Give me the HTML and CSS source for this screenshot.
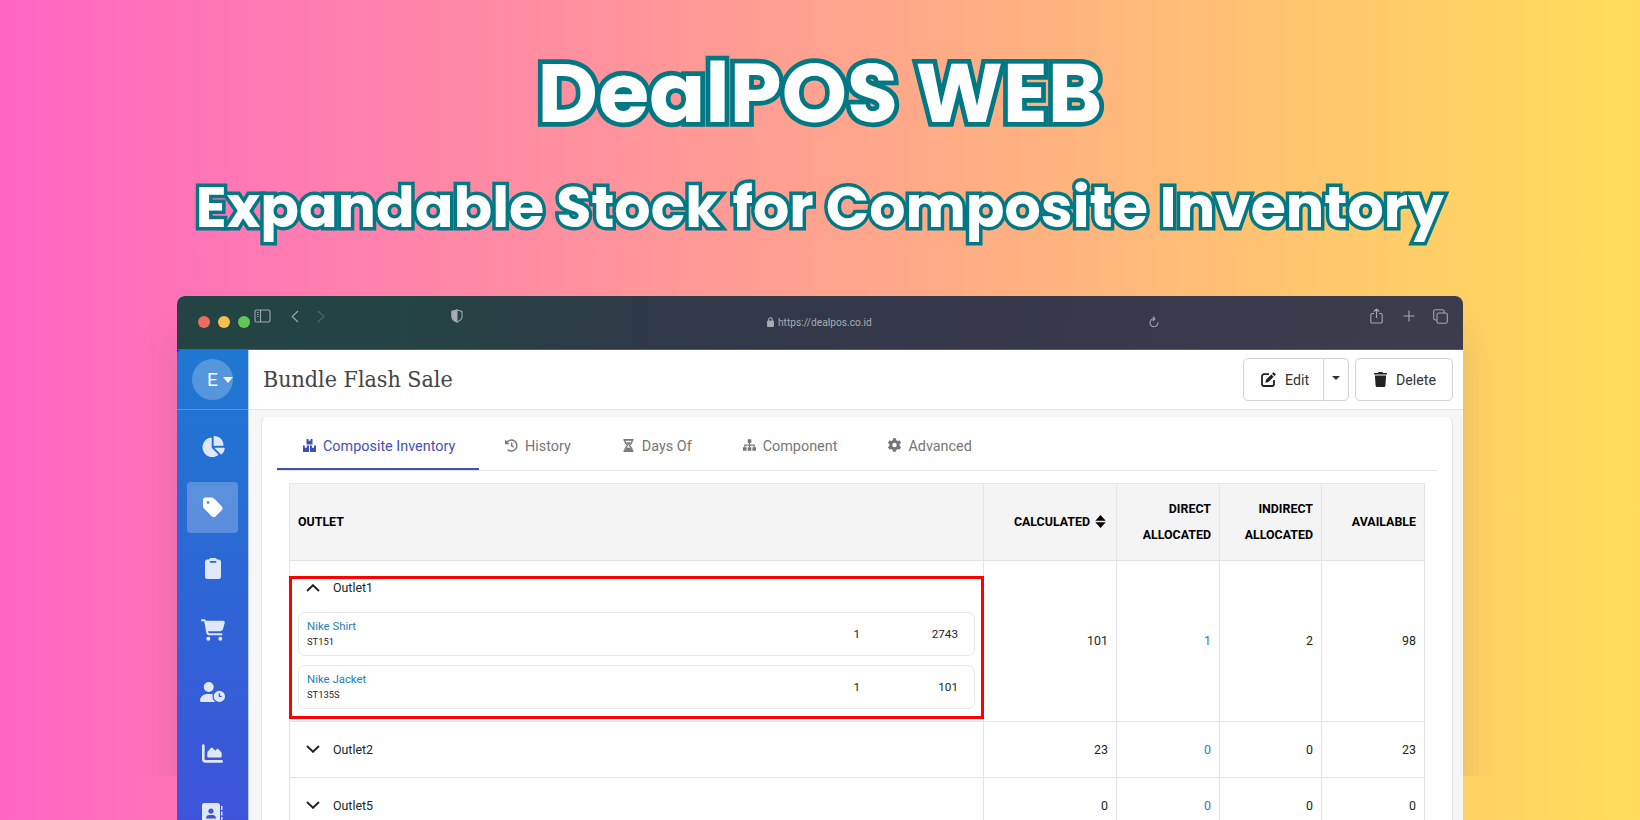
FILE: index.html
```html
<!DOCTYPE html>
<html lang="en">
<head>
    <meta charset="UTF-8">
    <meta name="viewport" content="width=device-width, initial-scale=1.0">
    <title>DealPOS WEB</title>
    <link rel="stylesheet" href="styles.css">
</head>
<body>

<div class="hero">
    <h1>DealPOS WEB</h1>
    <h2>Expandable Stock for Composite Inventory</h2>
</div>

<div class="stage">
    <div class="window-shadow"></div>
    <div class="window">
        <div class="titlebar">
            <div class="lights"><span class="red"></span><span class="yellow"></span><span class="green"></span></div>
            <svg class="i-panel" width="17" height="14" viewBox="0 0 17 14"><rect x="1" y="1" width="15" height="12" rx="1.5"/><path d="M6.5 1v12M3 3.5h1.5M3 5.5h1.5M3 7.5h1.5"/></svg>
            <svg class="i-back" width="8" height="13" viewBox="0 0 8 13"><path d="M7 1L1.2 6.500 7 12"/></svg>
            <svg class="i-next" width="8" height="13" viewBox="0 0 8 13"><path d="M1 1l5.800 5.500L1 12"/></svg>
            <svg class="i-shield" width="12" height="14" viewBox="0 0 12 14"><path d="M6 1L11 2.500V8c0 2.500-2.500 4-5 5C3.500 12 1 10.500 1 8V2.500z"/><path class="fill" d="M6 1v12C3.500 12 1 10.500 1 8V2.500z"/></svg>
            <div class="address">
                <svg width="7" height="10" viewBox="0 0 7 10"><rect class="fill" x="0.300" y="4" width="6.400" height="5.500" rx="0.800"/><path d="M1.600 4.500V2.800a1.900 1.900 0 0 1 3.800 0v1.700"/></svg>
                <span>https://dealpos.co.id</span>
            </div>
            <svg class="i-reload" width="10" height="12" viewBox="0 0 10 12"><path d="M5.500 2.800A4 4 0 1 0 9 6.500M3.800 .6L6 2.800 3.800 5"/></svg>
            <svg class="i-share" width="13" height="16" viewBox="0 0 13 16"><path d="M4 5.500H2A1.200 1.200 0 0 0 .8 6.700v7A1.200 1.200 0 0 0 2 15h9a1.200 1.200 0 0 0 1.200-1.300v-7A1.200 1.200 0 0 0 11 5.500H9M6.500 10V1M3.800 3.500L6.500 1l2.700 2.500"/></svg>
            <svg class="i-plus" width="12" height="12" viewBox="0 0 12 12"><path d="M6 .5v11M.5 6h11"/></svg>
            <svg class="i-copy" width="15" height="15" viewBox="0 0 15 15"><rect x="4" y="4" width="10.300" height="10.300" rx="1.800"/><path d="M4 11H2.500A1.800 1.800 0 0 1 .7 9.200V2.500A1.800 1.800 0 0 1 2.500.7h6.700A1.800 1.800 0 0 1 11 2.500V4"/></svg>
        </div>

        <div class="app">
            <div class="sidebar">
                <div class="user"><div class="avatar">E<span class="caret"></span></div></div>
                <div class="nav">
                    <a><svg width="24" height="21" viewBox="0 0 576 512"><path d="M304 240V16.600c0-9 7-16.600 16-16.600C443.700 0 544 100.300 544 224c0 9-7.600 16-16.600 16H304zM32 272C32 150.700 122.100 50.300 239 34.300c9.200-1.300 17 6.100 17 15.400V288L412.500 444.500c6.700 6.700 6.200 17.700-1.500 23.100C371.800 495.600 323.800 512 272 512C139.500 512 32 404.600 32 272zm526.400 16c9.300 0 16.600 7.800 15.400 17c-7.700 55.900-34.600 105.600-73.900 142.300c-6 5.600-15.400 5.200-21.200-.7L320 288H558.400z"/></svg></a>
                    <a class="active"><svg width="20" height="23" viewBox="0 0 448 512"><path d="M0 80V229.500c0 17 6.700 33.300 18.700 45.300l176 176c25 25 65.500 25 90.500 0L418.700 317.300c25-25 25-65.500 0-90.500l-176-176c-12-12-28.300-18.700-45.300-18.700H48C21.500 32 0 53.500 0 80zm112 32a32 32 0 1 1 0 64 32 32 0 1 1 0-64z"/></svg></a>
                    <a><svg width="16" height="21" viewBox="0 0 16 21"><path fill-rule="evenodd" d="M2.500 1.500h1.300Q4.500 0 6 0h4q1.500 0 2.200 1.500h1.300A2.500 2.500 0 0 1 16 4v14.500a2.500 2.500 0 0 1-2.500 2.500h-11A2.500 2.500 0 0 1 0 18.500V4a2.500 2.500 0 0 1 2.500-2.500zM5.500 3a.8.8 0 0 0 0 1.700h5a.8.8 0 0 0 0-1.700z"/></svg></a>
                    <a><svg width="24" height="22" viewBox="0 0 576 512"><path d="M0 24C0 10.700 10.700 0 24 0H69.500c22 0 41.500 12.800 50.600 32h411c26.300 0 45.500 25 38.600 50.400l-41 152.300c-8.500 31.400-37 53.300-69.500 53.300H170.700l5.400 28.500c2.200 11.300 12.100 19.500 23.600 19.500H488c13.300 0 24 10.700 24 24s-10.700 24-24 24H199.700c-34.600 0-64.300-24.600-70.700-58.500L77.400 54.500c-.7-3.800-4-6.500-7.900-6.500H24C10.700 48 0 37.300 0 24zM128 464a48 48 0 1 1 96 0 48 48 0 1 1 -96 0zm336-48a48 48 0 1 1 0 96 48 48 0 1 1 0-96z"/></svg></a>
                    <a><svg class="wide" width="27" height="22" viewBox="0 0 640 512"><path d="M224 0a128 128 0 1 1 0 256A128 128 0 1 1 224 0zM178.300 304h91.400c20.600 0 40.400 3.500 58.800 9.900C323 331 320 349.100 320 368c0 59.500 29.500 112.100 74.800 144H29.700C13.300 512 0 498.700 0 482.300C0 383.800 79.800 304 178.300 304zM352 368a144 144 0 1 1 288 0 144 144 0 1 1 -288 0zm144-80c-8.800 0-16 7.200-16 16v64c0 8.800 7.200 16 16 16h48c8.800 0 16-7.200 16-16s-7.200-16-16-16H512V304c0-8.800-7.200-16-16-16z"/></svg></a>
                    <a><svg width="21" height="21" viewBox="0 0 512 512"><path d="M64 64c0-17.700-14.300-32-32-32S0 46.300 0 64V400c0 44.200 35.800 80 80 80H480c17.700 0 32-14.300 32-32s-14.300-32-32-32H80c-8.800 0-16-7.200-16-16V64zm96 288H448c17.700 0 32-14.300 32-32V251.800c0-7.600-2.700-15-7.700-20.800l-65.800-76.800c-12.100-14.200-33.700-15-46.900-1.800l-21 21c-10 10-26.400 9.200-35.400-1.600l-39.200-47c-12.600-15.100-35.700-15.400-48.700-.6L135.900 215c-5.100 5.800-7.900 13.300-7.900 21.100v84c0 17.700 14.300 32 32 32z"/></svg></a>
                    <a><svg width="21" height="22" viewBox="0 0 21 22"><path fill-rule="evenodd" d="M2.500 0h13A2.500 2.500 0 0 1 18 2.500v17a2.500 2.500 0 0 1-2.500 2.500h-13A2.500 2.500 0 0 1 0 19.500v-17A2.500 2.500 0 0 1 2.500 0zM9 5.500a2.600 2.600 0 1 0 0 5.200 2.600 2.600 0 0 0 0-5.200zM7.500 12a3.400 3.400 0 0 0-3.400 3.400h9.800A3.400 3.400 0 0 0 10.500 12zM19 3h1.500v4H19zM19 8.500h1.500v4H19zM19 14h1.500v4H19z"/></svg></a>
                </div>
            </div>

            <div class="main">
                <div class="header">
                    <h3>Bundle Flash Sale</h3>
                    <div class="actions">
                        <div class="btn-group">
                            <button class="btn edit"><svg width="15" height="15" viewBox="0 0 15 15"><path class="line" d="M8 2.200H3A2 2 0 0 0 1 4.200V12a2 2 0 0 0 2 2h8a2 2 0 0 0 2-2V8"/><path d="M4.300 10.800l.7-3L10.300 2.400l2.400 2.400L7.300 10.100zM11 1.700l1-1a1 1 0 0 1 1.400 0l1 1a1 1 0 0 1 0 1.400l-1 1z"/></svg>Edit</button>
                            <button class="btn toggle"><span class="caret"></span></button>
                        </div>
                        <button class="btn delete"><svg width="13" height="15" viewBox="0 0 13 15"><path d="M4 .9L4.500 0h4l.5.900h3.500a.5.500 0 0 1 .5.500v1H0v-1a.5.500 0 0 1 .5-.500zM.9 3.500h11.200l-.7 10a1.500 1.500 0 0 1-1.500 1.500H3.100a1.500 1.500 0 0 1-1.500-1.500z"/></svg>Delete</button>
                    </div>
                </div>

                <div class="panel">
                    <div class="tabs">
                        <a class="tab active"><svg width="13" height="13" viewBox="0 0 13 13"><path d="M3.500 0h2v2l1-.6 1 .6V0h2v5.500h-6zM0 6.500h1.800v2.500l1-.6 1 .6V6.500H6V13H.5a.5.500 0 0 1-.5-.5zM7 6.500h2v2.500l1-.6 1 .6V6.500h2v6a.5.500 0 0 1-.5.5H7z"/></svg>Composite Inventory</a>
                        <a class="tab"><svg width="13" height="13" viewBox="0 0 13 13"><path class="line" d="M1.700 3.600A5.500 5.500 0 1 1 2.600 10.600M6.700 3.500v3.300l2 1.500"/><path d="M0 .6v4.700h4.700z"/></svg>History</a>
                        <a class="tab"><svg width="13" height="13" viewBox="-1 0 13 13"><path d="M.5 0h10v1.700h-10zM.5 11.300h10V13h-10z"/><path class="line" d="M2 1v1.500c0 2 2.500 3 2.500 4S2 8.500 2 10.500V12M9 1v1.500c0 2-2.500 3-2.500 4s2.500 2 2.500 4V12"/><path d="M2.500 11.500c0-2 1.500-3 3-3s3 1 3 3zM3 3.300h5L5.500 6z"/></svg>Days Of</a>
                        <a class="tab"><svg width="13" height="12" viewBox="0 0 13 12"><path d="M4.700 .3h3.600v3.600H4.700zM0 8.200h3.600v3.500H0zM4.700 8.200h3.600v3.500H4.700zM9.400 8.200H13v3.500H9.400z"/><path class="thin" d="M6.500 3.500v5M1.800 8.500V6.100h9.400v2.400"/></svg>Component</a>
                        <a class="tab"><svg width="13" height="14" viewBox="0.500 0 13 14"><circle class="line ring" cx="7" cy="7" r="3.700"/><path class="line teeth" d="M7 .3V3M7 11v2.700M1.200 3.650l2.300 1.350M10.500 9l2.300 1.350M1.200 10.350L3.500 9M10.500 5l2.300-1.350"/></svg>Advanced</a>
                    </div>

                    <table>
                        <colgroup><col class="c-outlet"><col class="c-calc"><col class="c-direct"><col class="c-indirect"><col class="c-avail"></colgroup>
                        <tr class="head">
                            <th>OUTLET</th>
                            <th class="calc">CALCULATED<svg width="11" height="13" viewBox="0 0 11 13"><path d="M5.500 0L10.700 5.700H.3zM.3 7.200h10.400L5.500 13z"/></svg></th>
                            <th>DIRECT<br>ALLOCATED</th>
                            <th>INDIRECT<br>ALLOCATED</th>
                            <th>AVAILABLE</th>
                        </tr>
                        <tr class="open">
                            <td>
                                <div class="outlet"><svg width="14" height="8" viewBox="0 0 14 8"><path d="M1 7l6-5.800L13 7"/></svg>Outlet1</div>
                                <div class="item">
                                    <div class="name"><a>Nike Shirt</a><small>ST151</small></div>
                                    <span class="qty">1</span><span class="stock">2743</span>
                                </div>
                                <div class="item">
                                    <div class="name"><a>Nike Jacket</a><small>ST135S</small></div>
                                    <span class="qty">1</span><span class="stock">101</span>
                                </div>
                                <div class="highlight"></div>
                            </td>
                            <td>101</td><td><a>1</a></td><td>2</td><td>98</td>
                        </tr>
                        <tr>
                            <td><div class="outlet"><svg width="14" height="8" viewBox="0 0 14 8"><path d="M1 1l6 5.800L13 1"/></svg>Outlet2</div></td>
                            <td>23</td><td><a>0</a></td><td>0</td><td>23</td>
                        </tr>
                        <tr>
                            <td><div class="outlet"><svg width="14" height="8" viewBox="0 0 14 8"><path d="M1 1l6 5.800L13 1"/></svg>Outlet5</div></td>
                            <td>0</td><td><a>0</a></td><td>0</td><td>0</td>
                        </tr>
                    </table>
                </div>
            </div>
        </div>
    </div>
</div>

</body>
</html>
```
FILE: styles.css
```css
* {
    box-sizing: border-box;
}

body {
    margin: 0;
    height: 820px;
    overflow: hidden;
    font-family: Roboto, 'Liberation Sans', sans-serif;
    background: linear-gradient(90deg, #ff66c4, #ffde59);
    color: #212529;
}

svg {
    flex: none;
}

.hero {
    height: 296px;
    padding-top: 33px;
    text-align: center;
}

.hero h1, .hero h2 {
    margin: 0;
    font-family: Poppins, Inter, sans-serif;
    font-weight: 700;
    color: #fff;
    white-space: nowrap;
    paint-order: stroke fill;
    -webkit-text-stroke-color: #007985;
}

.hero h1 {
    font-size: 83px;
    line-height: 120px;
    -webkit-text-stroke-width: 9.5px;
}

.hero h2 {
    margin-top: 14px;
    font-size: 57px;
    line-height: 81px;
    -webkit-text-stroke-width: 7px;
}

.stage {
    position: relative;
    width: 1286px;
    margin-left: 177px;
}

/* the shadow stops short of the page bottom */
.window-shadow {
    position: absolute;
    inset: 0 0 auto;
    height: 520px;
    border-radius: 8px;
    box-shadow: 0 35px 40px rgba(60, 60, 80, 0.14);
    clip-path: inset(0 -60px 40px);
}

.window {
    position: relative;
    height: 560px;
    border-radius: 8px 8px 0 0;
    overflow: hidden;
    background: #f6f6f6;
}

.titlebar {
    display: flex;
    align-items: flex-start;
    height: 54px;
    background: linear-gradient(97deg, #244443 0%, #244443 17%, #2e3947 36%, #35384a 55%, #3c3c4c 100%);
    border-bottom: 1px solid #5f5b62;
}

.titlebar svg {
    fill: none;
    stroke: #a3a8af;
    stroke-width: 1.1;
}

.titlebar svg .fill {
    fill: #a9adb4;
}

.lights {
    display: flex;
    gap: 8px;
    margin: 20px 0 0 21px;
}

.lights span {
    width: 12px;
    height: 12px;
    border-radius: 50%;
}

.red { background: #ec6b60; }
.yellow { background: #f5bf50; }
.green { background: #62c655; }

.i-panel { margin: 13px 0 0 4px; }
.i-back { margin: 14px 0 0 20px; }
.i-next { margin: 14px 0 0 18px; opacity: 0.35; }
.i-shield { margin: 13px 0 0 126px; }
.i-reload { margin: 20px 0 0 277px; }
.i-share { margin: 12px 0 0 211px; }
.i-plus { margin: 14px 0 0 20px; }
.i-copy { margin: 13px 0 0 18px; }

.address {
    display: flex;
    align-items: center;
    gap: 4px;
    width: 105px;
    height: 14px;
    margin: 19px 0 0 304px;
    font-size: 10.2px;
    color: #a9adb4;
    white-space: nowrap;
}

.app {
    display: flex;
    height: 506px;
    background: #00f;
}

.sidebar {
    width: 72px;
    border-right: 1px solid #b9d0f0;
    border-top-left-radius: 4px;
    background: linear-gradient(#1f78d1, #2470d2 20%, #3d54da 92%);
}

.user {
    height: 60px;
    padding: 9px 0 0 15px;
    border-bottom: 1px solid #5a96dc;
}

.avatar {
    display: flex;
    align-items: center;
    width: 41px;
    height: 41px;
    padding-left: 15px;
    border-radius: 50%;
    background: rgba(255, 255, 255, 0.24);
    color: #fff;
    font-size: 19px;
}

.caret {
    border: 5px solid transparent;
    border-top-color: currentColor;
    border-bottom: 0;
}

.avatar .caret {
    flex: none;
    margin-left: 5px;
    border-top-width: 6px;
}

.nav {
    display: flex;
    flex-direction: column;
    align-items: center;
    gap: 10.4px;
    padding-top: 10.6px;
}

.nav a {
    display: flex;
    flex: none;
    align-items: center;
    justify-content: center;
    width: 51px;
    height: 51px;
    border-radius: 4px;
    fill: #dfe8f8;
}

.nav .active {
    background: rgba(255, 255, 255, 0.24);
    fill: #fff;
}

.nav .wide {
    width: 25px;
}

.main {
    flex: 1;
    background: #f6f6f6;
}

.header {
    display: flex;
    align-items: center;
    justify-content: space-between;
    height: 60px;
    padding: 0 10px 0 14px;
    background: #fff;
    border-bottom: 1px solid #e3e3e3;
}

.header h3 {
    margin: 0 0 2px;
    font-family: 'Roboto Slab', 'DejaVu Serif Condensed', 'DejaVu Serif', serif;
    font-size: 23px;
    font-weight: 400;
    color: #444;
}

.actions, .btn-group {
    display: flex;
}

.actions {
    gap: 6px;
}

.btn {
    display: flex;
    align-items: center;
    height: 43px;
    padding: 0;
    border: 1px solid #d4d4d4;
    border-radius: 5px;
    background: #fff;
    font-family: inherit;
    font-size: 14.2px;
    color: #333;
    fill: #222;
}

.btn .line {
    fill: none;
    stroke: #222;
    stroke-width: 1.8;
}

.edit {
    width: 81px;
    padding-left: 17px;
    gap: 9px;
    border-radius: 5px 0 0 5px;
}

.toggle {
    width: 26px;
    margin-left: -1px;
    justify-content: center;
    border-radius: 0 5px 5px 0;
}

.toggle .caret {
    border-width: 4px 4px 0;
    margin-bottom: 3px;
}

.delete {
    width: 98px;
    padding-left: 18px;
    gap: 9px;
}

.panel {
    height: 500px;
    margin: 6px 10px 0 12px;
    padding: 0 15px;
    border: 1px solid #e2e2e2;
    border-top-color: #f6f6f6;
    border-radius: 7px;
    background: #fff;
}

.tabs {
    display: flex;
    height: 54px;
    border-bottom: 1px solid #e4e4e4;
}

.tab {
    display: flex;
    align-items: center;
    gap: 7px;
    height: 53px;
    padding: 8px 25px 0 26px;
    border-bottom: 2px solid transparent;
    font-size: 14.4px;
    color: #777;
    fill: #777;
    white-space: nowrap;
}

.tab svg {
    margin-bottom: 3px;
}

.tab .line, .tab .thin {
    fill: none;
    stroke: #777;
    stroke-width: 1.4;
}

.tab .thin {
    stroke-width: 1.1;
}

.tab .ring {
    stroke-width: 3;
}

.tab .teeth {
    stroke-width: 3.2;
}

.tab.active {
    width: 202px;
    border-bottom-color: #3f51b5;
    color: #3f51b5;
    fill: #3f51b5;
}

table {
    width: 1135px;
    margin: 12px 0 0 12px;
    border-collapse: collapse;
    table-layout: fixed;
    font-size: 12.4px;
}

.c-outlet { width: 694px; }
.c-calc { width: 133px; }
.c-direct { width: 103px; }
.c-indirect { width: 102px; }
.c-avail { width: 103px; }

th, td {
    height: 56px;
    padding: 0 8px 1px;
    border: 1px solid #e2e4e6;
    text-align: right;
}

th:first-child, td:first-child {
    text-align: left;
}

.head th {
    height: 77px;
    background: #f4f4f4;
    font-size: 12.4px;
    font-weight: 700;
    line-height: 26px;
    color: #000;
}

.head .calc {
    padding-right: 10px;
}

.calc svg {
    margin-left: 5px;
    vertical-align: -2px;
}

table a {
    color: #1e80b8;
}

.open td {
    position: relative;
    height: 161px;
    padding-bottom: 2px;
}

.open td:first-child {
    vertical-align: top;
}

.open .outlet {
    height: 51px;
    padding-top: 2px;
}

.outlet {
    display: flex;
    align-items: center;
    gap: 13px;
    padding-left: 8px;
}

.outlet svg {
    fill: none;
    stroke: #222;
    stroke-width: 1.9;
}

.item {
    display: flex;
    align-items: center;
    height: 44px;
    margin-bottom: 9px;
    padding: 0 16px 0 8px;
    border: 1px solid #e6e9ec;
    border-radius: 7px;
    font-size: 11.7px;
}

.name {
    flex: 1;
}

.name a, .name small {
    display: block;
    line-height: 16px;
}

.name a {
    font-size: 11.4px;
}

.name small {
    font-size: 9.4px;
}

.stock {
    width: 98px;
    text-align: right;
}

/* red marker drawn over the expanded cell */
.highlight {
    position: absolute;
    top: 15px;
    left: -1px;
    width: 695px;
    height: 143px;
    border: 3px solid #f00;
}
```
